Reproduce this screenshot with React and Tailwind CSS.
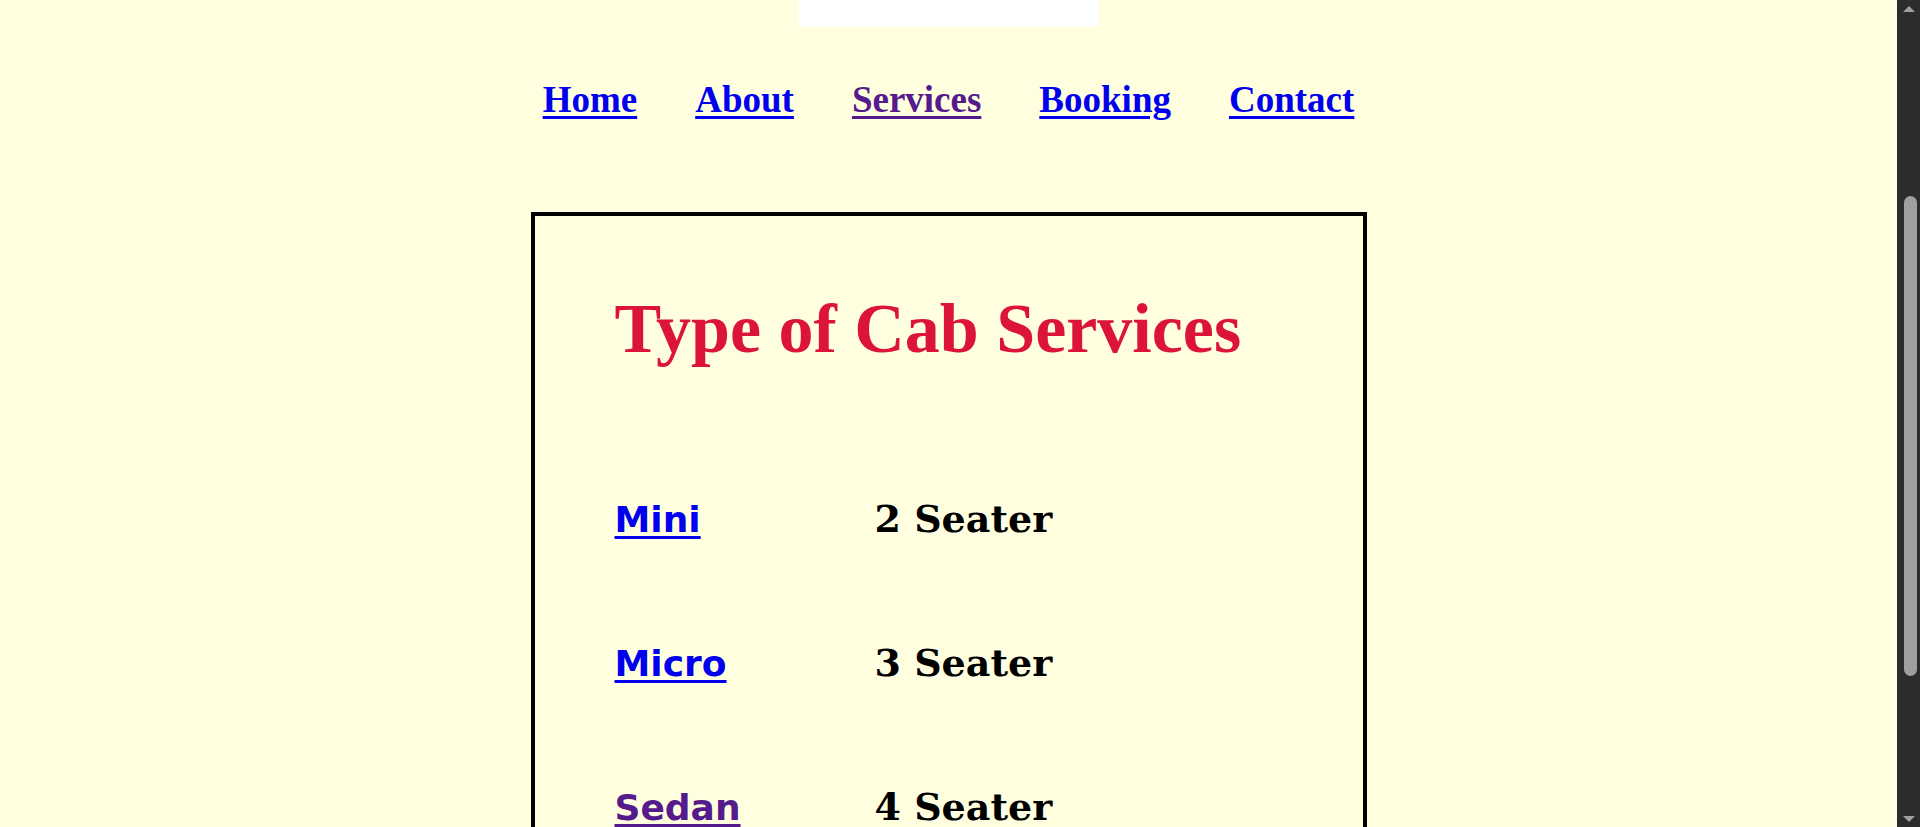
import React from "react";

const navLinks = [
  { label: "Home", visited: false },
  { label: "About", visited: false },
  { label: "Services", visited: true },
  { label: "Booking", visited: false },
  { label: "Contact", visited: false },
];

const cabs = [
  { name: "Mini", seats: "2 Seater", visited: false },
  { name: "Micro", seats: "3 Seater", visited: false },
  { name: "Sedan", seats: "4 Seater", visited: true },
];

const App = () => {
  return (
    <div className="h-[827px] w-full overflow-hidden flex bg-[#ffffe0]">
      {/* page */}
      <div className="flex-1 flex flex-col items-center">
        {/* logo strip, mostly scrolled away */}
        <div className="w-[300px] h-[27px] bg-white shrink-0" />

        {/* nav */}
        <nav
          className="mt-[52px] flex gap-[58px] text-[37px] leading-[41px] font-bold"
          style={{ fontFamily: '"Liberation Serif", "Times New Roman", serif' }}
        >
          {navLinks.map((link) => (
            <a
              key={link.label}
              href="#"
              className={
                "underline decoration-[3px] underline-offset-[4px] " +
                (link.visited ? "text-[#551a8b]" : "text-[#0000ee]")
              }
            >
              {link.label}
            </a>
          ))}
        </nav>

        {/* services box */}
        <div className="mt-[92px] w-[836px] border-4 border-black shrink-0 pl-[80px] pt-[75px] pb-[80px]">
          <h1
            className="text-[70px] leading-[76px] font-bold text-[#dc143c]"
            style={{ fontFamily: '"Liberation Serif", "Times New Roman", serif' }}
          >
            Type of Cab Services
          </h1>

          <div className="mt-[130px] flex flex-col gap-[100px]">
            {cabs.map((cab) => (
              <div key={cab.name} className="flex items-baseline h-[44px] leading-[44px]">
                <a
                  href="#"
                  className={
                    "w-[260px] text-[36px] font-bold underline decoration-[3px] underline-offset-[4px] " +
                    (cab.visited ? "text-[#551a8b]" : "text-[#0000ee]")
                  }
                  style={{ fontFamily: '"DejaVu Sans", Verdana, sans-serif' }}
                >
                  {cab.name}
                </a>
                <span
                  className="text-[38px] font-bold text-black"
                  style={{ fontFamily: '"DejaVu Serif", Georgia, serif' }}
                >
                  {cab.seats}
                </span>
              </div>
            ))}
          </div>
        </div>
      </div>

      {/* scrollbar */}
      <div className="w-[23px] shrink-0 bg-[#2c2c2c] flex flex-col items-center">
        <div className="h-[17px] flex items-center justify-center">
          <div className="w-0 h-0 border-l-[6px] border-r-[6px] border-b-[6px] border-l-transparent border-r-transparent border-b-[#a0a0a0]" />
        </div>
        <div className="flex-1 w-full flex flex-col items-center pt-[179px]">
          <div className="w-[13px] h-[480px] rounded-full bg-[#9f9f9f] ml-[4px]" />
        </div>
        <div className="h-[17px] flex items-center justify-center">
          <div className="w-0 h-0 border-l-[6px] border-r-[6px] border-t-[6px] border-l-transparent border-r-transparent border-t-[#a0a0a0]" />
        </div>
      </div>
    </div>
  );
};

export default App;
